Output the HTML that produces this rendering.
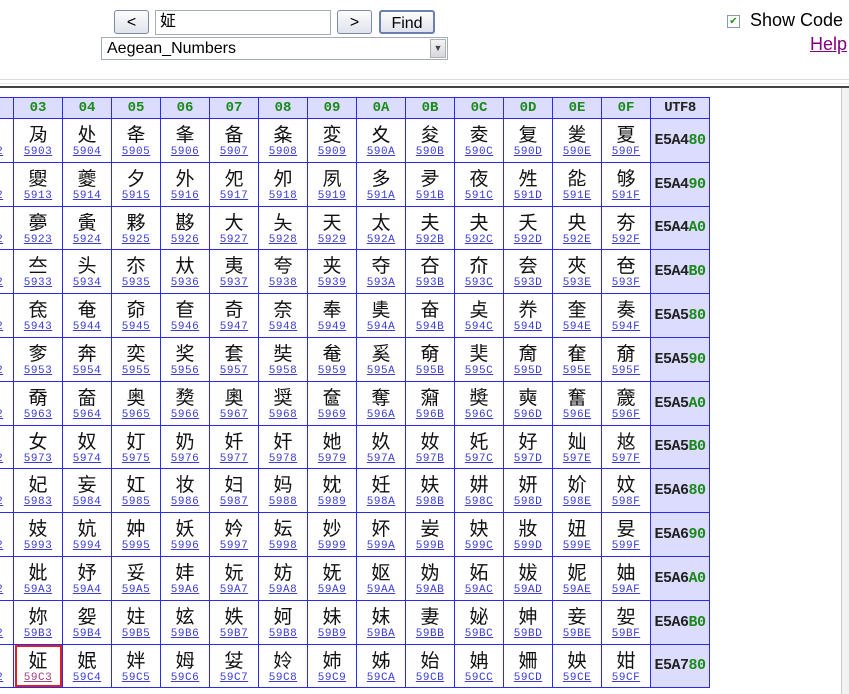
<!DOCTYPE html>
<html><head><meta charset="utf-8"><style>
body{margin:0;width:849px;height:692px;overflow:hidden;background:#fff;font-family:"Liberation Sans","Noto Sans CJK SC",sans-serif;position:relative}
.btn{position:absolute;top:10px;height:24px;border:1px solid #7a8aa8;border-radius:3px;background:linear-gradient(#fdfdfe,#dfe3ec);font-size:16px;text-align:center;line-height:23px;box-sizing:border-box;color:#000}
.inp{position:absolute;left:155px;top:10px;width:176px;height:25px;border:1px solid #a5acb5;box-sizing:border-box;font-size:16px;line-height:22px;padding-left:4px}
.sel{position:absolute;left:101px;top:37px;width:347px;height:23px;border:1px solid #a5acb5;box-sizing:border-box;font-size:16px;line-height:21px;padding-left:5px}
.sel .ar{position:absolute;right:1px;top:1px;width:16px;height:19px;background:linear-gradient(#f4f4f4,#d8d8dc);border:1px solid #b0b0b8;box-sizing:border-box;font-size:9px;text-align:center;line-height:17px;color:#445}
.frame{position:absolute;left:0;top:86px;width:849px;height:606px;border-top:2px solid #444;overflow:hidden}
.sb{position:absolute;right:0;top:0;width:7px;height:606px;background:#f2f2f2;border-left:1px solid #ccc}
table{position:absolute;left:-36px;top:9px;border-collapse:collapse;table-layout:fixed}
td{border:1px solid #2b2bf0;width:48px;height:42.8px;padding:0;text-align:center;vertical-align:top}
tr.h td{height:20px;background:#dcdcff;color:#1a8a1a;font:bold 14px "Liberation Mono",monospace;vertical-align:middle}
tr.h td.u{color:#222}
td .c{font-size:19px;line-height:22px;padding-top:4px;color:#111;font-family:"Noto Sans CJK SC",sans-serif}
td .k{font:11px "Liberation Mono",monospace;letter-spacing:0.5px;color:#3b3bd8;text-decoration:underline;line-height:14px}
td.u{width:58px;background:#dcdcff;font:bold 15px "Liberation Mono",monospace;letter-spacing:-0.5px;vertical-align:middle;color:#222}
td.u b{color:#1a8a1a}
td.sel3{outline:2px solid #e02020;outline-offset:-3px}
td.sel3 .k{color:#a04080}
</style></head><body>
<div class="btn" style="left:114px;width:35px">&lt;</div>
<div class="inp">&#x59C3;</div>
<div class="btn" style="left:337px;width:35px">&gt;</div>
<div class="btn" style="left:379px;width:56px;border:2px solid #6a80b0">Find</div>
<div class="sel">Aegean_Numbers<div class="ar">&#9660;</div></div>
<div style="position:absolute;left:727px;top:15px;width:11px;height:11px;border:1px solid #8a9aaa;font-size:10px;line-height:11px;color:#1a9a1a;text-align:center">&#10004;</div>
<div style="position:absolute;left:750px;top:10px;font-size:18px">Show Code</div>
<div style="position:absolute;left:810px;top:34px;font-size:18px;color:#800080;text-decoration:underline">Help</div>
<div style="position:absolute;left:0;top:79px;width:849px;height:3px;border-top:1px solid #ddd;border-bottom:1px solid #e8e8e8"></div>
<div class="frame">
<table>
<tr class="h"><td>02</td><td>03</td><td>04</td><td>05</td><td>06</td><td>07</td><td>08</td><td>09</td><td>0A</td><td>0B</td><td>0C</td><td>0D</td><td>0E</td><td>0F</td><td class="u">UTF8</td></tr>
<tr><td><div class="c">&#x5902;</div><div class="k">5902</div></td><td><div class="c">&#x5903;</div><div class="k">5903</div></td><td><div class="c">&#x5904;</div><div class="k">5904</div></td><td><div class="c">&#x5905;</div><div class="k">5905</div></td><td><div class="c">&#x5906;</div><div class="k">5906</div></td><td><div class="c">&#x5907;</div><div class="k">5907</div></td><td><div class="c">&#x5908;</div><div class="k">5908</div></td><td><div class="c">&#x5909;</div><div class="k">5909</div></td><td><div class="c">&#x590A;</div><div class="k">590A</div></td><td><div class="c">&#x590B;</div><div class="k">590B</div></td><td><div class="c">&#x590C;</div><div class="k">590C</div></td><td><div class="c">&#x590D;</div><div class="k">590D</div></td><td><div class="c">&#x590E;</div><div class="k">590E</div></td><td><div class="c">&#x590F;</div><div class="k">590F</div></td><td class="u">E5A4<b>80</b></td></tr>
<tr><td><div class="c">&#x5912;</div><div class="k">5912</div></td><td><div class="c">&#x5913;</div><div class="k">5913</div></td><td><div class="c">&#x5914;</div><div class="k">5914</div></td><td><div class="c">&#x5915;</div><div class="k">5915</div></td><td><div class="c">&#x5916;</div><div class="k">5916</div></td><td><div class="c">&#x5917;</div><div class="k">5917</div></td><td><div class="c">&#x5918;</div><div class="k">5918</div></td><td><div class="c">&#x5919;</div><div class="k">5919</div></td><td><div class="c">&#x591A;</div><div class="k">591A</div></td><td><div class="c">&#x591B;</div><div class="k">591B</div></td><td><div class="c">&#x591C;</div><div class="k">591C</div></td><td><div class="c">&#x591D;</div><div class="k">591D</div></td><td><div class="c">&#x591E;</div><div class="k">591E</div></td><td><div class="c">&#x591F;</div><div class="k">591F</div></td><td class="u">E5A4<b>90</b></td></tr>
<tr><td><div class="c">&#x5922;</div><div class="k">5922</div></td><td><div class="c">&#x5923;</div><div class="k">5923</div></td><td><div class="c">&#x5924;</div><div class="k">5924</div></td><td><div class="c">&#x5925;</div><div class="k">5925</div></td><td><div class="c">&#x5926;</div><div class="k">5926</div></td><td><div class="c">&#x5927;</div><div class="k">5927</div></td><td><div class="c">&#x5928;</div><div class="k">5928</div></td><td><div class="c">&#x5929;</div><div class="k">5929</div></td><td><div class="c">&#x592A;</div><div class="k">592A</div></td><td><div class="c">&#x592B;</div><div class="k">592B</div></td><td><div class="c">&#x592C;</div><div class="k">592C</div></td><td><div class="c">&#x592D;</div><div class="k">592D</div></td><td><div class="c">&#x592E;</div><div class="k">592E</div></td><td><div class="c">&#x592F;</div><div class="k">592F</div></td><td class="u">E5A4<b>A0</b></td></tr>
<tr><td><div class="c">&#x5932;</div><div class="k">5932</div></td><td><div class="c">&#x5933;</div><div class="k">5933</div></td><td><div class="c">&#x5934;</div><div class="k">5934</div></td><td><div class="c">&#x5935;</div><div class="k">5935</div></td><td><div class="c">&#x5936;</div><div class="k">5936</div></td><td><div class="c">&#x5937;</div><div class="k">5937</div></td><td><div class="c">&#x5938;</div><div class="k">5938</div></td><td><div class="c">&#x5939;</div><div class="k">5939</div></td><td><div class="c">&#x593A;</div><div class="k">593A</div></td><td><div class="c">&#x593B;</div><div class="k">593B</div></td><td><div class="c">&#x593C;</div><div class="k">593C</div></td><td><div class="c">&#x593D;</div><div class="k">593D</div></td><td><div class="c">&#x593E;</div><div class="k">593E</div></td><td><div class="c">&#x593F;</div><div class="k">593F</div></td><td class="u">E5A4<b>B0</b></td></tr>
<tr><td><div class="c">&#x5942;</div><div class="k">5942</div></td><td><div class="c">&#x5943;</div><div class="k">5943</div></td><td><div class="c">&#x5944;</div><div class="k">5944</div></td><td><div class="c">&#x5945;</div><div class="k">5945</div></td><td><div class="c">&#x5946;</div><div class="k">5946</div></td><td><div class="c">&#x5947;</div><div class="k">5947</div></td><td><div class="c">&#x5948;</div><div class="k">5948</div></td><td><div class="c">&#x5949;</div><div class="k">5949</div></td><td><div class="c">&#x594A;</div><div class="k">594A</div></td><td><div class="c">&#x594B;</div><div class="k">594B</div></td><td><div class="c">&#x594C;</div><div class="k">594C</div></td><td><div class="c">&#x594D;</div><div class="k">594D</div></td><td><div class="c">&#x594E;</div><div class="k">594E</div></td><td><div class="c">&#x594F;</div><div class="k">594F</div></td><td class="u">E5A5<b>80</b></td></tr>
<tr><td><div class="c">&#x5952;</div><div class="k">5952</div></td><td><div class="c">&#x5953;</div><div class="k">5953</div></td><td><div class="c">&#x5954;</div><div class="k">5954</div></td><td><div class="c">&#x5955;</div><div class="k">5955</div></td><td><div class="c">&#x5956;</div><div class="k">5956</div></td><td><div class="c">&#x5957;</div><div class="k">5957</div></td><td><div class="c">&#x5958;</div><div class="k">5958</div></td><td><div class="c">&#x5959;</div><div class="k">5959</div></td><td><div class="c">&#x595A;</div><div class="k">595A</div></td><td><div class="c">&#x595B;</div><div class="k">595B</div></td><td><div class="c">&#x595C;</div><div class="k">595C</div></td><td><div class="c">&#x595D;</div><div class="k">595D</div></td><td><div class="c">&#x595E;</div><div class="k">595E</div></td><td><div class="c">&#x595F;</div><div class="k">595F</div></td><td class="u">E5A5<b>90</b></td></tr>
<tr><td><div class="c">&#x5962;</div><div class="k">5962</div></td><td><div class="c">&#x5963;</div><div class="k">5963</div></td><td><div class="c">&#x5964;</div><div class="k">5964</div></td><td><div class="c">&#x5965;</div><div class="k">5965</div></td><td><div class="c">&#x5966;</div><div class="k">5966</div></td><td><div class="c">&#x5967;</div><div class="k">5967</div></td><td><div class="c">&#x5968;</div><div class="k">5968</div></td><td><div class="c">&#x5969;</div><div class="k">5969</div></td><td><div class="c">&#x596A;</div><div class="k">596A</div></td><td><div class="c">&#x596B;</div><div class="k">596B</div></td><td><div class="c">&#x596C;</div><div class="k">596C</div></td><td><div class="c">&#x596D;</div><div class="k">596D</div></td><td><div class="c">&#x596E;</div><div class="k">596E</div></td><td><div class="c">&#x596F;</div><div class="k">596F</div></td><td class="u">E5A5<b>A0</b></td></tr>
<tr><td><div class="c">&#x5972;</div><div class="k">5972</div></td><td><div class="c">&#x5973;</div><div class="k">5973</div></td><td><div class="c">&#x5974;</div><div class="k">5974</div></td><td><div class="c">&#x5975;</div><div class="k">5975</div></td><td><div class="c">&#x5976;</div><div class="k">5976</div></td><td><div class="c">&#x5977;</div><div class="k">5977</div></td><td><div class="c">&#x5978;</div><div class="k">5978</div></td><td><div class="c">&#x5979;</div><div class="k">5979</div></td><td><div class="c">&#x597A;</div><div class="k">597A</div></td><td><div class="c">&#x597B;</div><div class="k">597B</div></td><td><div class="c">&#x597C;</div><div class="k">597C</div></td><td><div class="c">&#x597D;</div><div class="k">597D</div></td><td><div class="c">&#x597E;</div><div class="k">597E</div></td><td><div class="c">&#x597F;</div><div class="k">597F</div></td><td class="u">E5A5<b>B0</b></td></tr>
<tr><td><div class="c">&#x5982;</div><div class="k">5982</div></td><td><div class="c">&#x5983;</div><div class="k">5983</div></td><td><div class="c">&#x5984;</div><div class="k">5984</div></td><td><div class="c">&#x5985;</div><div class="k">5985</div></td><td><div class="c">&#x5986;</div><div class="k">5986</div></td><td><div class="c">&#x5987;</div><div class="k">5987</div></td><td><div class="c">&#x5988;</div><div class="k">5988</div></td><td><div class="c">&#x5989;</div><div class="k">5989</div></td><td><div class="c">&#x598A;</div><div class="k">598A</div></td><td><div class="c">&#x598B;</div><div class="k">598B</div></td><td><div class="c">&#x598C;</div><div class="k">598C</div></td><td><div class="c">&#x598D;</div><div class="k">598D</div></td><td><div class="c">&#x598E;</div><div class="k">598E</div></td><td><div class="c">&#x598F;</div><div class="k">598F</div></td><td class="u">E5A6<b>80</b></td></tr>
<tr><td><div class="c">&#x5992;</div><div class="k">5992</div></td><td><div class="c">&#x5993;</div><div class="k">5993</div></td><td><div class="c">&#x5994;</div><div class="k">5994</div></td><td><div class="c">&#x5995;</div><div class="k">5995</div></td><td><div class="c">&#x5996;</div><div class="k">5996</div></td><td><div class="c">&#x5997;</div><div class="k">5997</div></td><td><div class="c">&#x5998;</div><div class="k">5998</div></td><td><div class="c">&#x5999;</div><div class="k">5999</div></td><td><div class="c">&#x599A;</div><div class="k">599A</div></td><td><div class="c">&#x599B;</div><div class="k">599B</div></td><td><div class="c">&#x599C;</div><div class="k">599C</div></td><td><div class="c">&#x599D;</div><div class="k">599D</div></td><td><div class="c">&#x599E;</div><div class="k">599E</div></td><td><div class="c">&#x599F;</div><div class="k">599F</div></td><td class="u">E5A6<b>90</b></td></tr>
<tr><td><div class="c">&#x59A2;</div><div class="k">59A2</div></td><td><div class="c">&#x59A3;</div><div class="k">59A3</div></td><td><div class="c">&#x59A4;</div><div class="k">59A4</div></td><td><div class="c">&#x59A5;</div><div class="k">59A5</div></td><td><div class="c">&#x59A6;</div><div class="k">59A6</div></td><td><div class="c">&#x59A7;</div><div class="k">59A7</div></td><td><div class="c">&#x59A8;</div><div class="k">59A8</div></td><td><div class="c">&#x59A9;</div><div class="k">59A9</div></td><td><div class="c">&#x59AA;</div><div class="k">59AA</div></td><td><div class="c">&#x59AB;</div><div class="k">59AB</div></td><td><div class="c">&#x59AC;</div><div class="k">59AC</div></td><td><div class="c">&#x59AD;</div><div class="k">59AD</div></td><td><div class="c">&#x59AE;</div><div class="k">59AE</div></td><td><div class="c">&#x59AF;</div><div class="k">59AF</div></td><td class="u">E5A6<b>A0</b></td></tr>
<tr><td><div class="c">&#x59B2;</div><div class="k">59B2</div></td><td><div class="c">&#x59B3;</div><div class="k">59B3</div></td><td><div class="c">&#x59B4;</div><div class="k">59B4</div></td><td><div class="c">&#x59B5;</div><div class="k">59B5</div></td><td><div class="c">&#x59B6;</div><div class="k">59B6</div></td><td><div class="c">&#x59B7;</div><div class="k">59B7</div></td><td><div class="c">&#x59B8;</div><div class="k">59B8</div></td><td><div class="c">&#x59B9;</div><div class="k">59B9</div></td><td><div class="c">&#x59BA;</div><div class="k">59BA</div></td><td><div class="c">&#x59BB;</div><div class="k">59BB</div></td><td><div class="c">&#x59BC;</div><div class="k">59BC</div></td><td><div class="c">&#x59BD;</div><div class="k">59BD</div></td><td><div class="c">&#x59BE;</div><div class="k">59BE</div></td><td><div class="c">&#x59BF;</div><div class="k">59BF</div></td><td class="u">E5A6<b>B0</b></td></tr>
<tr><td><div class="c">&#x59C2;</div><div class="k">59C2</div></td><td class="sel3"><div class="c">&#x59C3;</div><div class="k">59C3</div></td><td><div class="c">&#x59C4;</div><div class="k">59C4</div></td><td><div class="c">&#x59C5;</div><div class="k">59C5</div></td><td><div class="c">&#x59C6;</div><div class="k">59C6</div></td><td><div class="c">&#x59C7;</div><div class="k">59C7</div></td><td><div class="c">&#x59C8;</div><div class="k">59C8</div></td><td><div class="c">&#x59C9;</div><div class="k">59C9</div></td><td><div class="c">&#x59CA;</div><div class="k">59CA</div></td><td><div class="c">&#x59CB;</div><div class="k">59CB</div></td><td><div class="c">&#x59CC;</div><div class="k">59CC</div></td><td><div class="c">&#x59CD;</div><div class="k">59CD</div></td><td><div class="c">&#x59CE;</div><div class="k">59CE</div></td><td><div class="c">&#x59CF;</div><div class="k">59CF</div></td><td class="u">E5A7<b>80</b></td></tr>
</table>
<div class="sb"></div>
</div>
</body></html>
